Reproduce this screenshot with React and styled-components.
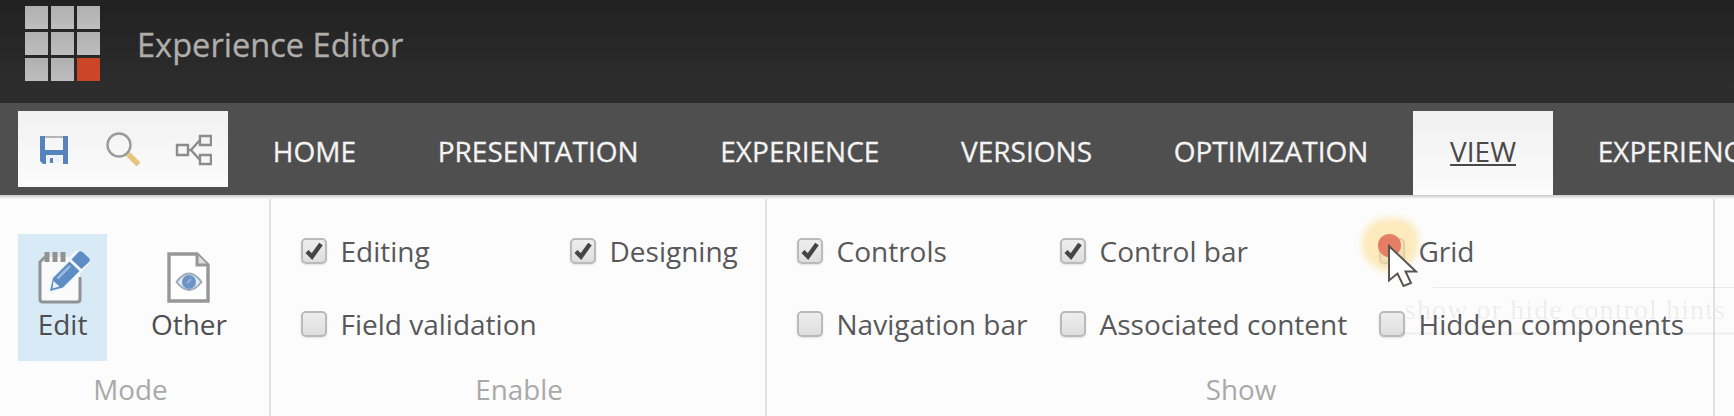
import React from "react";
import styled, { createGlobalStyle, css } from "styled-components";

const GlobalStyle = createGlobalStyle`
  * { box-sizing: border-box; }
  body { margin: 0; background: #fcfcfc; font-family: "Open Sans", "Noto Sans", sans-serif; }
`;

const Editor = styled.div`
  position: relative;
  width: 1734px;
  height: 416px;
  overflow: hidden;
  display: flex;
  flex-direction: column;
  background: #fcfcfc;
`;

const Header = styled.header`
  height: 103px;
  flex: none;
  display: flex;
  align-items: flex-start;
  padding: 6px 0 0 25px;
  background: linear-gradient(#212121, #2d2d2d 85%, #2b2b2b);
`;

const Logo = styled.div`
  display: grid;
  grid-template-columns: repeat(3, 23px);
  grid-auto-rows: 23px;
  gap: 3px;
`;

const LogoCell = styled.span`
  background: ${(p) => (p.$accent ? "#cd4527" : "linear-gradient(#b0b0b0, #bebebe)")};
`;

const Title = styled.h1`
  margin: 15px 0 0 37px;
  font-size: 32.6px;
  line-height: 48px;
  font-weight: 400;
  color: #b0adab;
  -webkit-text-stroke: 0.3px #b0adab;
`;

const TabBar = styled.nav`
  height: 92px;
  flex: none;
  display: flex;
  gap: 8px;
  padding: 8px 0 0 18px;
  background: #4f4f4f;
  overflow: hidden;
`;

const QuickBar = styled.div`
  width: 210px;
  height: 76px;
  flex: none;
  display: flex;
  align-items: center;
  padding: 2px 0 0 20px;
  gap: 34px;
  background: linear-gradient(#f1f1f1, #fcfcfc);
`;

const Tab = styled.a`
  flex: none;
  height: 84px;
  padding: 0 36.85px;
  font-size: 28px;
  line-height: 80px;
  color: #f4f4f4;
  white-space: nowrap;
  -webkit-text-stroke: 0.3px currentColor;
  ${(p) =>
    p.$active &&
    css`
      color: #4a4848;
      background: linear-gradient(#f0f0f0, #fcfcfc);
      text-decoration: underline;
      text-decoration-thickness: 2px;
      text-underline-offset: 2px;
      -webkit-text-stroke: 0;
    `}
`;

const Ribbon = styled.main`
  flex: 1;
  display: flex;
  padding-top: 4px;
  background: linear-gradient(#c8c8c8, #fcfcfc 4px);
`;

const Group = styled.section`
  width: ${(p) => p.$width}px;
  flex: none;
  display: flex;
  flex-direction: column;
  border-right: 2px solid #e2e2e2;
`;

const GroupBody = styled.div`
  height: 168px;
  display: flex;
`;

const ModeBody = styled(GroupBody)`
  padding: 35px 0 0 18px;
  gap: 30px;
`;

const GroupTitle = styled.div`
  padding-right: ${(p) => p.$trim || 0}px;
  padding-left: ${(p) => (p.$trim ? 0 : 2)}px;
  text-align: center;
  font-size: 27.8px;
  line-height: 44px;
  color: #a9a9a9;
`;

const ModeButton = styled.button`
  width: ${(p) => p.$width}px;
  height: 127px;
  padding: 16px 0 0;
  border: 0;
  display: flex;
  flex-direction: column;
  align-items: center;
  font: 28px/40px "Open Sans", "Noto Sans", sans-serif;
  color: #4e4e52;
  background: ${(p) => (p.$active ? "#d7eaf6" : "transparent")};
`;

const Options = styled(GroupBody)`
  padding: 34px 0 0 ${(p) => p.$left}px;
  display: grid;
  grid-template-columns: ${(p) => p.$columns};
  grid-template-rows: 36px 36px;
  row-gap: 37px;
`;

const Option = styled.label`
  display: flex;
  align-items: center;
  gap: 13.5px;
  font-size: 28px;
  line-height: 36px;
  color: #58585a;
  white-space: nowrap;
`;

const Box = styled.span`
  width: 26px;
  height: 26px;
  flex: none;
  display: flex;
  align-items: center;
  justify-content: center;
  border: 2px solid #bababa;
  border-radius: 5px;
  background: linear-gradient(#eeeeee, #dedede);
  box-shadow: 0 1px 2px rgba(0, 0, 0, 0.12);
`;

const Hint = styled.div`
  position: absolute;
  left: 1400px;
  top: 287px;
  width: 340px;
  height: 48px;
  padding-left: 5px;
  font: 28px/46px "Liberation Serif", serif;
  letter-spacing: 1.1px;
  color: rgba(0, 0, 0, 0.07);
  border-bottom: 3px solid rgba(0, 0, 0, 0.035);
  white-space: nowrap;
  pointer-events: none;

  &::before {
    content: "";
    position: absolute;
    left: 33px;
    right: 0;
    top: 0;
    height: 1px;
    background: rgba(0, 0, 0, 0.07);
  }
`;

const Halo = styled.div`
  position: absolute;
  left: 1362px;
  top: 218px;
  width: 56px;
  height: 53px;
  border-radius: 46% 40% 50% 50%;
  background: rgba(252, 222, 150, 0.62);
  filter: blur(3px);
`;

const Click = styled.div`
  position: absolute;
  left: 1378px;
  top: 234px;
  width: 23px;
  height: 23px;
  border-radius: 50%;
  background: rgba(228, 112, 88, 0.88);
  filter: blur(0.7px);
`;

const Pointer = styled.svg`
  position: absolute;
  left: 1386px;
  top: 243px;
`;

const SaveIcon = () => (
  <svg width="32" height="32" viewBox="0 0 32 32">
    <path d="M2 2h5v14h18V2h5v28h-5v-9H8v9H5l-3-3z" fill="#5584bd" />
    <path d="M7 3h18" stroke="#b4b4b4" strokeWidth="2" />
    <path d="M8 21h16v8H8z" fill="#eef2f8" />
    <path d="M12 24h3v5h-3z" fill="#5584bd" />
  </svg>
);

const SearchIcon = () => (
  <svg width="36" height="38" viewBox="0 0 36 38">
    <path d="M24 23l10.500 10.500" stroke="#e7c57e" strokeWidth="5.500" />
    <circle cx="15" cy="14" r="11.500" fill="none" stroke="#9a9a9a" strokeWidth="2.400" />
  </svg>
);

const TreeIcon = () => (
  <svg width="38" height="32" viewBox="0 0 38 32">
    <g fill="none" stroke="#8c8c8c" strokeWidth="2.400">
      <path d="M3 11h11v10H3zM26 2h11v9H26zM26 21h11v9H26zM14 16h3M26 6l-9 10 9 10" />
    </g>
  </svg>
);

const EditIcon = () => (
  <svg width="56" height="54" viewBox="0 0 56 54">
    <path d="M10 7L5 12v37q0 3 3 3h34q3 0 3-3V10L40 7z" fill="#fafafa" />
    <path d="M10 7L5 12v37q0 3 3 3h34q3 0 3-3V27" fill="none" stroke="#8f9296" strokeWidth="3" />
    <path d="M12 2v10M20 2v10M28 2v10" stroke="#929292" strokeWidth="5" />
    <path d="M12 44l4-17L41 0l15 12-26 27z" fill="#f3f8fc" />
    <path d="M15 41l3-13L34.500 11.500l10 9.500L28 37.500z" fill="#5e8dc5" />
    <path d="M36.500 9.500l7-7.500q2-1.500 4 0l6.500 6q1.500 2 0 4l-7.500 7z" fill="#5e8dc5" />
    <path d="M22.500 28.500L35 16" stroke="#9dbbe0" strokeWidth="2.500" />
    <path d="M18.500 31l6 5.500-7 2z" fill="#eaf1f9" />
  </svg>
);

const OtherIcon = () => (
  <svg width="44" height="54" viewBox="0 -2 44 54">
    <path d="M2 2h28l11 11v36H2z" fill="#fff" stroke="#979797" strokeWidth="3.400" />
    <path d="M30 2v11h11" fill="#ddd" stroke="#979797" strokeWidth="3" />
    <path d="M9.500 30q12.500-17 25 0q-12.500 16-25 0z" fill="#e4ebf2" stroke="#9caab9" strokeWidth="2" />
    <circle cx="22" cy="30" r="7" fill="#6a93c6" />
    <path d="M20 31l4-4" stroke="#98b4d8" strokeWidth="2" />
  </svg>
);

const CheckMark = () => (
  <svg width="20" height="20" viewBox="0 0 20 20">
    <path d="M3 10.500l5 5L17 3" fill="none" stroke="#454545" strokeWidth="4.400" />
  </svg>
);

const Check = ({ label, checked }) => (
  <Option>
    <Box>{checked && <CheckMark />}</Box>
    {label}
  </Option>
);

const TABS = ["HOME", "PRESENTATION", "EXPERIENCE", "VERSIONS", "OPTIMIZATION", "VIEW", "EXPERIENCE"];

export default function App() {
  return (
    <>
      <GlobalStyle />
      <Editor>
        <Header>
          <Logo>
            {Array.from({ length: 9 }, (_, i) => (
              <LogoCell key={i} $accent={i === 8} />
            ))}
          </Logo>
          <Title>Experience Editor</Title>
        </Header>
        <TabBar>
          <QuickBar>
            <SaveIcon />
            <SearchIcon />
            <TreeIcon />
          </QuickBar>
          {TABS.map((name, i) => (
            <Tab key={i} $active={name === "VIEW"}>{name}</Tab>
          ))}
        </TabBar>
        <Ribbon>
          <Group $width={271}>
            <ModeBody>
              <ModeButton $width={89} $active><EditIcon />Edit</ModeButton>
              <ModeButton $width={104}><OtherIcon />Other</ModeButton>
            </ModeBody>
            <GroupTitle $trim={8}>Mode</GroupTitle>
          </Group>
          <Group $width={496}>
            <Options $left={30} $columns="269px auto">
              <Check label="Editing" checked />
              <Check label="Designing" checked />
              <Check label="Field validation" />
            </Options>
            <GroupTitle>Enable</GroupTitle>
          </Group>
          <Group $width={948}>
            <Options $left={30} $columns="263px 319px auto">
              <Check label="Controls" checked />
              <Check label="Control bar" checked />
              <Check label="Grid" />
              <Check label="Navigation bar" />
              <Check label="Associated content" />
              <Check label="Hidden components" />
            </Options>
            <GroupTitle>Show</GroupTitle>
          </Group>
        </Ribbon>
        <Hint>show or hide control hints</Hint>
        <Halo />
        <Click />
        <Pointer width="32" height="46" viewBox="0 0 32 46">
          <path d="M3 3v34.500l8.500-7 6 12.500 7.500-3-5.500-11.500 10.500 0z" fill="#fff" stroke="#5a5553" strokeWidth="2" />
        </Pointer>
      </Editor>
    </>
  );
}
